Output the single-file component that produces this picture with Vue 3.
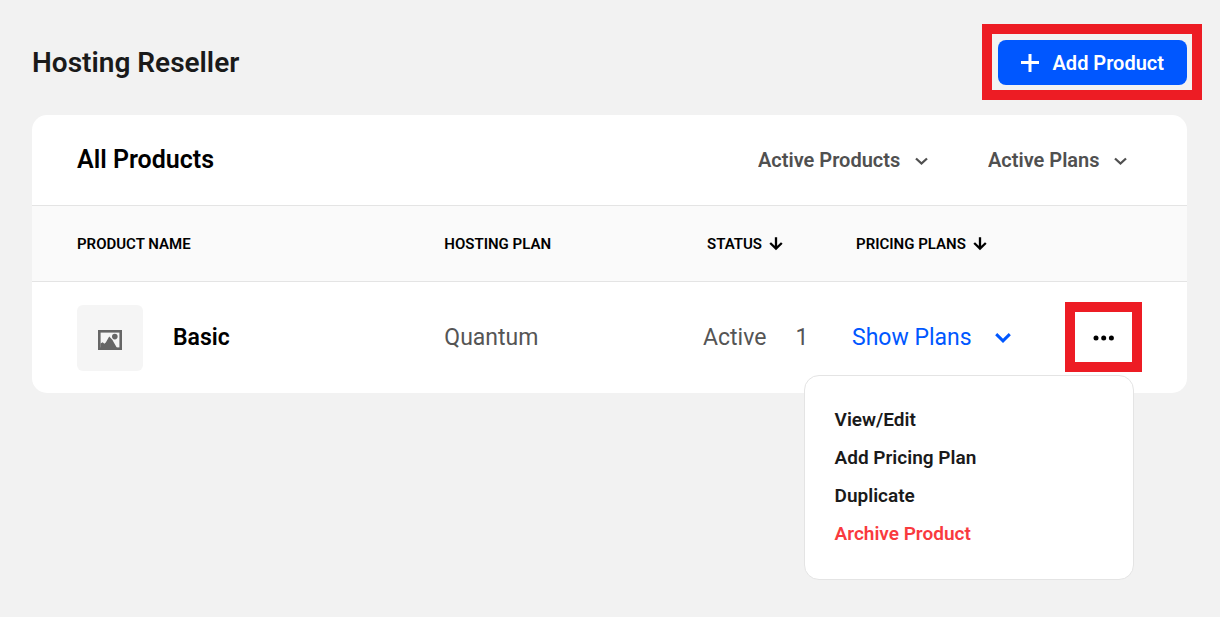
<script setup>
import { ref } from 'vue'

const productFilter = ref('Active Products')
const planFilter = ref('Active Plans')
const menuOpen = ref(true)
const products = [
  { name: 'Basic', plan: 'Quantum', status: 'Active', count: 1 },
]
</script>

<template>
  <main class="page">
    <header class="page-head">
      <h1>Hosting Reseller</h1>
      <div class="add-wrap">
        <button type="button" class="add">
          <svg width="18" height="18" viewBox="0 0 18 18" aria-hidden="true">
            <path d="M9 0v18M0 8.5h18" fill="none" stroke="currentColor" stroke-width="3" />
          </svg>
          Add Product
        </button>
      </div>
    </header>

    <section class="card">
      <div class="card-head">
        <h2>All Products</h2>
        <div class="filters">
          <label class="filter">
            <select v-model="productFilter" aria-label="Product filter">
              <option>Active Products</option>
            </select>
            <svg width="13" height="12" viewBox="0 0 13 12" aria-hidden="true">
              <path d="M1 4.5l5.5 5 5.5-5" fill="none" stroke="currentColor" stroke-width="2.3" />
            </svg>
          </label>
          <label class="filter">
            <select v-model="planFilter" aria-label="Plan filter">
              <option>Active Plans</option>
            </select>
            <svg width="13" height="12" viewBox="0 0 13 12" aria-hidden="true">
              <path d="M1 4.5l5.5 5 5.5-5" fill="none" stroke="currentColor" stroke-width="2.3" />
            </svg>
          </label>
        </div>
      </div>

      <table>
        <colgroup>
          <col class="c-name" />
          <col class="c-plan" />
          <col class="c-status" />
          <col class="c-count" />
          <col class="c-pricing" />
          <col class="c-actions" />
        </colgroup>
        <thead>
          <tr>
            <th scope="col">Product Name</th>
            <th scope="col">Hosting Plan</th>
            <th scope="col" class="sortable">
              <button type="button" class="sort">
                Status
                <svg width="14" height="14" viewBox="0 0 14 14" aria-hidden="true">
                  <path d="M7 .2v12M1.2 6L7 11.6 12.8 6" fill="none" stroke="currentColor" stroke-width="2.3" />
                </svg>
              </button>
            </th>
            <td></td>
            <th scope="col" class="sortable">
              <button type="button" class="sort">
                Pricing Plans
                <svg width="14" height="14" viewBox="0 0 14 14" aria-hidden="true">
                  <path d="M7 .2v12M1.2 6L7 11.6 12.8 6" fill="none" stroke="currentColor" stroke-width="2.3" />
                </svg>
              </button>
            </th>
            <td></td>
          </tr>
        </thead>
        <tbody>
          <tr v-for="p in products" :key="p.name">
            <td>
              <div class="product">
                <span class="thumb">
                  <svg width="24" height="20" viewBox="0 0 24 20" aria-hidden="true">
                    <rect x="1.3" y="1.3" width="21.4" height="17.4" fill="none" stroke="currentColor" stroke-width="2.6" />
                    <path d="M2.5 18V13.5L4.7 12.3l1.6 1.4 1.5-1.2L11.2 6.5l3.1 3.2L19 18z" fill="currentColor" />
                    <circle cx="16.8" cy="6.6" r="2.8" fill="currentColor" />
                  </svg>
                </span>
                <strong>{{ p.name }}</strong>
              </div>
            </td>
            <td>{{ p.plan }}</td>
            <td>{{ p.status }}</td>
            <td>{{ p.count }}</td>
            <td>
              <button type="button" class="show">
                Show Plans
                <svg width="16" height="10" viewBox="0 0 16 10" aria-hidden="true">
                  <path d="M1.2 1.2L8 7.8l6.8-6.6" fill="none" stroke="currentColor" stroke-width="3" />
                </svg>
              </button>
            </td>
            <td>
              <div class="actions">
                <button type="button" class="more" aria-label="More actions" @click="menuOpen = !menuOpen">
                  <svg width="21" height="6" viewBox="0 0 21 6" aria-hidden="true" fill="currentColor">
                    <circle cx="3" cy="3" r="2.5" />
                    <circle cx="10.7" cy="3" r="2.5" />
                    <circle cx="18.4" cy="3" r="2.5" />
                  </svg>
                </button>
                <div v-if="menuOpen" class="menu">
                  <button type="button">View/Edit</button>
                  <button type="button">Add Pricing Plan</button>
                  <button type="button">Duplicate</button>
                  <button type="button" class="danger">Archive Product</button>
                </div>
              </div>
            </td>
          </tr>
        </tbody>
      </table>
    </section>
  </main>
</template>

<style>
body {
  background: #f2f2f2;
}
</style>

<style scoped>
.page {
  box-sizing: border-box;
  min-height: 100vh;
  padding: 40px 33px 32px 32px;
  font-family: Roboto, "Liberation Sans", sans-serif;
  color: #1a1a1a;
}
button,
select {
  margin: 0;
  padding: 0;
  border: 0;
  background: none;
  font: inherit;
  color: inherit;
  cursor: pointer;
}
svg {
  display: block;
  flex: none;
}
h1,
h2 {
  margin: 0;
  font-weight: 600;
}
.page-head {
  display: flex;
  align-items: center;
  justify-content: space-between;
  margin-bottom: 30px;
}
h1 {
  font-size: 28px;
  line-height: 36px;
}
.add-wrap {
  position: relative;
}
.add-wrap::after {
  content: "";
  position: absolute;
  inset: -16px -15px -15px -16px;
  border: 10px solid #ed1c24;
  pointer-events: none;
}
.add {
  display: flex;
  align-items: center;
  gap: 14px;
  height: 45px;
  padding: 0 23px;
  border-radius: 8px;
  background: #0057ff;
  color: #fff;
  font-size: 20px;
  font-weight: 600;
}
.card {
  border-radius: 15px;
  background: #fff;
}
.card-head {
  display: flex;
  align-items: center;
  justify-content: space-between;
  height: 90px;
  padding: 0 60px 0 45px;
}
h2 {
  color: #000;
  font-size: 25px;
  line-height: 32px;
}
.filters {
  display: flex;
  gap: 60px;
}
.filter {
  display: flex;
  align-items: center;
  gap: 14px;
  color: #505050;
  font-size: 20px;
  font-weight: 600;
}
select {
  appearance: none;
}
table {
  width: 100%;
  table-layout: fixed;
  border-collapse: separate;
  border-spacing: 0;
}
.c-name { width: 35.7%; }
.c-plan { width: 22.4%; }
.c-status { width: 8%; }
.c-count { width: 4.9%; }
.c-pricing { width: 18.4%; }
.c-actions { width: 10.6%; }
th,
td {
  padding: 0;
  text-align: left;
  white-space: nowrap;
}
thead th,
thead td {
  height: 75px;
  border-top: 1px solid #e4e4e4;
  border-bottom: 1px solid #e4e4e4;
  background: #fafafa;
  color: #000;
  font-size: 15px;
  font-weight: 600;
  text-transform: uppercase;
}
th:first-child,
td:first-child {
  padding-left: 45px;
}
.sortable {
  padding-left: 4px;
}
.sort {
  display: flex;
  align-items: center;
  gap: 7px;
  text-transform: inherit;
}
tbody td {
  height: 111px;
  color: #555;
  font-size: 23px;
}
.product {
  display: flex;
  align-items: center;
  gap: 30px;
}
.product strong {
  color: #000;
  font-weight: 600;
}
.thumb {
  display: flex;
  align-items: center;
  justify-content: center;
  box-sizing: border-box;
  width: 66px;
  height: 66px;
  padding-top: 4px;
  border-radius: 6px;
  background: #f5f5f5;
  color: #666;
}
.show {
  display: flex;
  align-items: center;
  gap: 23px;
  color: #0057ff;
}
.actions {
  position: relative;
  width: 77px;
  margin-bottom: 2px;
}
.more {
  display: flex;
  align-items: center;
  justify-content: center;
  width: 77px;
  height: 70px;
  padding-top: 2px;
  border: 10px solid #ed1c24;
  color: #000;
}
.menu {
  position: absolute;
  top: 73px;
  right: 8px;
  z-index: 1;
  display: flex;
  flex-direction: column;
  align-items: flex-start;
  gap: 14px;
  box-sizing: border-box;
  width: 330px;
  padding: 32px 30px 33px;
  border: 1px solid #e4e4e4;
  border-radius: 15px;
  background: #fff;
}
.menu button {
  color: #1a1a1a;
  font-size: 19px;
  font-weight: 600;
  line-height: 24px;
}
.menu .danger {
  color: #f93a3e;
}
</style>
